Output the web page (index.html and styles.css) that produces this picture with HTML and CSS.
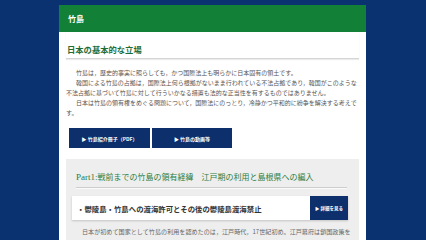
FILE: index.html
```html
<!DOCTYPE html>
<html lang="ja">
<head>
<meta charset="utf-8">
<title>竹島</title>
<link rel="stylesheet" href="styles.css">
</head>
<body>
<div class="panel">
  <div class="panel-head"><h1>竹島</h1></div>
  <div class="panel-body">
    <h2 class="lead-title">日本の基本的な立場</h2>
    <div class="lead-text">
      <p>竹島は，歴史的事実に照らしても，かつ国際法上も明らかに日本固有の領土です。</p>
      <p>韓国による竹島の占拠は，国際法上何ら根拠がないまま行われている不法占拠であり，韓国がこのような<br>不法占拠に基づいて竹島に対して行ういかなる措置も法的な正当性を有するものではありません。</p>
      <p>日本は竹島の領有権をめぐる問題について，国際法にのっとり，冷静かつ平和的に紛争を解決する考えで<br>す。</p>
    </div>
    <div class="btns">
      <a class="btn btn-wide" href="#">▶ 竹島紹介冊子（PDF）</a>
      <a class="btn" href="#">▶ 竹島の動画等</a>
    </div>
    <section class="part">
      <h3 class="part-title"><span class="latin">Part1:</span>戦前までの竹島の領有経緯　江戸期の利用と島根県への編入</h3>
      <div class="topic">
        <span class="topic-title">・鬱陵島・竹島への渡海許可とその後の鬱陵島渡海禁止</span>
        <a class="more" href="#">▶ 詳細を見る</a>
      </div>
      <p class="part-text">日本が初めて国家として竹島の利用を認めたのは，江戸時代，17世紀初め。江戸幕府は鎖国政策を</p>
    </section>
  </div>
</div>
</body>
</html>
```

FILE: styles.css
```css
html, body {
  margin: 0;
  padding: 0;
}
body {
  background: #0a3270;
  font-family: "Noto Sans CJK JP", "Noto Sans", sans-serif;
  height: 240px;
  overflow: hidden;
}
.panel {
  width: 307px;
  margin: 5px 0 0 59px;
  background: #fff;
  min-height: 235px;
}
.panel-head {
  height: 27px;
  background: #138038;
  padding-left: 9px;
  display: flex;
  align-items: center;
}
.panel-head h1 {
  margin: 0;
  font-size: 8px;
  line-height: 1;
  color: #fff;
  font-weight: bold;
}
.panel-body {
  padding: 0 7px;
}
.lead-title {
  margin: 0;
  padding: 12px 0 4px 1px;
  font-size: 8.3px;
  line-height: 10px;
  font-weight: bold;
  color: #1e6c36;
  border-bottom: 1px solid #d3d6d3;
  box-shadow: 0 1px 1px rgba(0, 0, 0, 0.08);
}
.lead-text {
  margin-top: 9px;
}
.lead-text p {
  margin: 0;
  font-size: 6px;
  line-height: 10px;
  color: #555;
  text-indent: 10px;
}
.btns {
  display: flex;
  gap: 2px;
  margin-top: 10px;
  padding-left: 3px;
}
.btn {
  width: 80px;
  height: 20px;
  background: #0d2f6b;
  color: #fff;
  font-size: 5px;
  font-weight: bold;
  text-decoration: none;
  display: flex;
  align-items: center;
  justify-content: center;
}
.btn-wide {
  width: 81px;
}
.part {
  margin-top: 11px;
  background: #eeeeee;
  padding-bottom: 10px;
}
.part-title {
  margin: 0 12px 0 10px;
  padding: 12px 0 4px;
  font-size: 8px;
  line-height: 12px;
  font-weight: normal;
  color: #2b7d40;
  border-bottom: 1px solid #cdcdcd;
  box-shadow: 0 1px 0 #fafafa;
}
.latin {
  font-family: "Liberation Serif", serif;
  font-size: 9px;
}
.topic {
  margin: 8px 11px 0 6px;
  height: 24px;
  display: flex;
  background: #fff;
  box-shadow: 0 1px 2px rgba(0, 0, 0, 0.18);
}
.topic-title {
  flex: 1;
  padding-left: 5px;
  display: flex;
  align-items: center;
  font-size: 7.4px;
  font-weight: bold;
  color: #333;
}
.more {
  width: 38px;
  background: #0d2f6b;
  color: #fff;
  font-size: 4.5px;
  font-weight: bold;
  text-decoration: none;
  display: flex;
  align-items: center;
  justify-content: center;
}
.part-text {
  margin: 7px 0 0;
  padding: 0 0 0 6px;
  font-size: 6.1px;
  line-height: 10px;
  color: #666;
  text-indent: 10px;
  white-space: nowrap;
}
```
